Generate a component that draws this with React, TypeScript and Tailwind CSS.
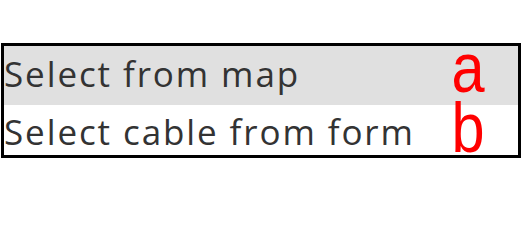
const rows = [
  { label: "Select from map", mark: "a", bg: "bg-[#e0e0e0]", h: "h-[59px]", pb: "pb-[14px]", mb: "mb-[2px]" },
  { label: "Select cable from form", mark: "b", bg: "bg-white", h: "h-[50px]", pb: "pb-[6px]", mb: "mb-[-8px]" },
];

export default function App() {
  return (
    <div className="w-[529px] h-[216px] bg-white pt-[43px] pl-[1px]">
      <div className="w-[520px] border-[3px] border-black">
        {rows.map((r) => (
          <div key={r.mark} className={`${r.h} ${r.bg} flex items-end justify-between`}>
            <span className={`${r.pb} text-[35px] tracking-[1.9px] leading-none text-[#333] font-['Open_Sans',sans-serif] whitespace-nowrap`}>
              {r.label}
            </span>
            <span className={`${r.mb} w-[100px] text-center scale-x-[0.85] text-[70px] leading-none text-[#ff0000] font-['Liberation_Sans',Arial,sans-serif]`}>
              {r.mark}
            </span>
          </div>
        ))}
      </div>
    </div>
  );
}
